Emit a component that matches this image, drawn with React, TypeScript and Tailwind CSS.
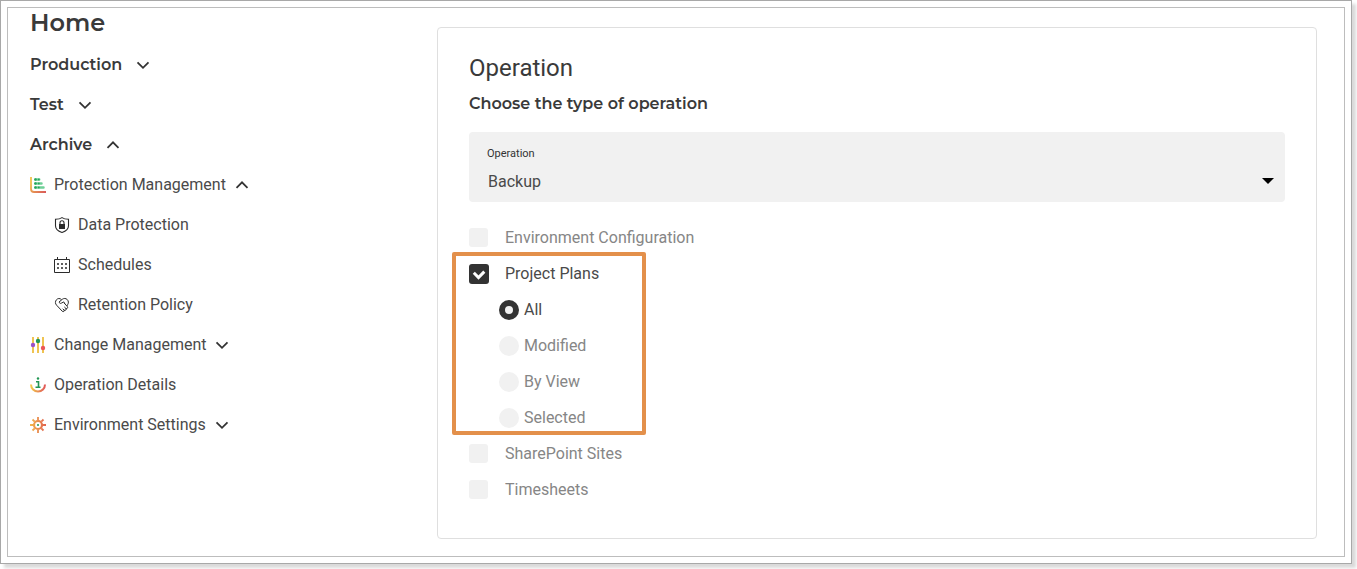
import React, { useState } from "react";

const heading = "font-['Montserrat','Inter',sans-serif] text-[#3a3a3a]";

function Chevron({ open }: { open: boolean }) {
  return (
    <svg width="14" height="14" viewBox="0 0 14 14" fill="none" stroke="#333" strokeWidth="1.8" aria-hidden="true">
      <path d={open ? "M1.5 9.8 7 4.300l5.500 5.500" : "M1.5 4.300 7 9.800l5.500-5.500"} />
    </svg>
  );
}

function BarsIcon() {
  return (
    <svg width="16" height="16" viewBox="0 0 16 16" fill="none" aria-hidden="true">
      <defs>
        <linearGradient id="axis" x1="0" y1="0" x2="1" y2="1">
          <stop offset="0.2" stopColor="#f0c04c" />
          <stop offset="1" stopColor="#d9595a" />
        </linearGradient>
      </defs>
      <path d="M1 0v12q0 3 3 3h12" stroke="url(#axis)" strokeWidth="1.8" />
      <path d="M5.2 2.5h4M5.2 6.5h6.300M5.2 10.5h8.300" stroke="#6fcf97" strokeWidth="2.5" strokeLinecap="round" />
      <g fill="#27a35c">
        <circle cx="5.5" cy="2.5" r="1.2" />
        <circle cx="8.8" cy="2.5" r="0.9" />
        <circle cx="5.5" cy="6.5" r="1.2" />
        <circle cx="8.8" cy="6.5" r="0.9" />
        <circle cx="5.5" cy="10.5" r="1.2" />
        <circle cx="8.8" cy="10.5" r="0.9" />
      </g>
    </svg>
  );
}

function ShieldIcon() {
  return (
    <svg width="16" height="16" viewBox="0 0 16 16" fill="none" stroke="#2b2b2b" aria-hidden="true">
      <path d="M8 .6C6 2 4 2.200 1.500 2.200v6.500c0 3.500 3 5.600 6.500 6.800 3.500-1.200 6.500-3.300 6.500-6.800V2.200C12 2.200 10 2 8 .6Z" strokeWidth="1.1" />
      <path d="M6 7V5.800a2 2 0 0 1 4 0V7" strokeWidth="1.1" />
      <path d="M5 7h6v5H5z" fill="#2b2b2b" stroke="none" />
    </svg>
  );
}

function CalendarIcon() {
  return (
    <svg width="16" height="16" viewBox="0 0 16 16" fill="none" stroke="#2b2b2b" aria-hidden="true">
      <path d="M.5 2.5h15v13H.5zM3.5 0v3M12.5 0v3" />
      <path d="M3 7h2M7 7h2M11 7h2M3 11h2M7 11h2M11 11h2" strokeWidth="1.6" />
    </svg>
  );
}

function HandshakeIcon() {
  return (
    <svg width="16" height="16" viewBox="0 0 16 16" fill="none" stroke="#2b2b2b" strokeLinejoin="round" strokeLinecap="round" aria-hidden="true">
      <path d="M7.200 2.300C5.800 1 3.800 1.300 2.500 2.700c-1.500 1.700-1.400 4 .1 5.500l5.600 6c1.100 1.100 2.500.1 1.900-1.100 1.300.9 2.600-.4 1.800-1.600 1.300.5 2.300-.8 1.500-1.900l-3-3.300" />
      <path d="M5.500 4.600 8.300 2.300c1.500-1.200 3.500-1.100 4.900.2 1.500 1.500 1.500 3.700.4 5.200l-.6 1" />
      <path d="M5.500 4.600c-.8 1.300.6 2.300 1.700 1.600l2.600-1.300.8 1.400" />
      <path d="m9 12 1.100 1.100M10.600 10.200l1.300 1.300" />
    </svg>
  );
}

function SlidersIcon() {
  return (
    <svg width="16" height="16" viewBox="0 0 16 16" aria-hidden="true">
      <path d="M3 0v16M8 0v16M13 0v16" stroke="#efc452" strokeWidth="2" />
      <circle cx="3" cy="8" r="2.2" fill="#9b51c7" />
      <circle cx="8" cy="4" r="2.2" fill="#219653" />
      <circle cx="13" cy="11" r="2.2" fill="#eb5757" />
    </svg>
  );
}

function InfoIcon() {
  return (
    <svg width="16" height="16" viewBox="0 0 16 16" fill="none" aria-hidden="true">
      <defs>
        <linearGradient id="arc" x1="0" y1="0" x2="1" y2="0">
          <stop offset="0" stopColor="#f2c94c" />
          <stop offset="1" stopColor="#e15858" />
        </linearGradient>
      </defs>
      <path d="M1 7.5a7 7 0 0 0 14 0" stroke="url(#arc)" strokeWidth="2" />
      <path d="M6 4.8h2.5V10M5.5 10.2h5" stroke="#219653" strokeWidth="1.6" />
      <circle cx="8" cy="1.5" r="1.2" fill="#219653" />
    </svg>
  );
}

function GearIcon() {
  return (
    <svg width="16" height="16" viewBox="0 0 16 16" fill="none" aria-hidden="true">
      <defs>
        <linearGradient id="gear" gradientUnits="userSpaceOnUse" x1="0" y1="0" x2="16" y2="0">
          <stop offset="0" stopColor="#f2b84c" />
          <stop offset="1" stopColor="#e0604f" />
        </linearGradient>
      </defs>
      <g stroke="url(#gear)">
        <circle cx="8" cy="8" r="4" strokeWidth="2.2" />
        <path d="m8.01 0-.02 3.5M8.01 12.5 7.99 16M0 8.01 3.5 7.99M12.5 8.01 16 7.99M2.5 2.5l2.2 2.2M11.3 11.3l2.2 2.2M13.5 2.5l-2.2 2.2M4.7 11.3l-2.2 2.2" strokeWidth="1.8" />
      </g>
      <circle cx="8" cy="8" r="1" fill="#219653" />
    </svg>
  );
}

interface GroupProps {
  label: string;
  initialOpen?: boolean;
  icon?: React.ReactNode;
  children?: React.ReactNode;
}

function EnvironmentGroup({ label, initialOpen = false, children }: GroupProps) {
  const [open, setOpen] = useState(initialOpen);
  return (
    <li>
      <button
        type="button"
        aria-expanded={open}
        onClick={() => setOpen(!open)}
        className={`flex h-10 cursor-pointer items-center gap-3.5 text-base font-semibold ${heading}`}
      >
        {label}
        <Chevron open={open} />
      </button>
      {open && <ul>{children}</ul>}
    </li>
  );
}

function MenuGroup({ label, icon, initialOpen = false, children }: GroupProps) {
  const [open, setOpen] = useState(initialOpen);
  return (
    <li>
      <button
        type="button"
        aria-expanded={open}
        onClick={() => setOpen(!open)}
        className="flex h-10 cursor-pointer items-center gap-[9px]"
      >
        <span className="flex items-center gap-2">
          {icon}
          {label}
        </span>
        <Chevron open={open} />
      </button>
      {open && <ul className="pl-6">{children}</ul>}
    </li>
  );
}

function MenuLink({ label, icon }: { label: string; icon: React.ReactNode }) {
  return (
    <li>
      <a href="#" className="flex h-10 items-center gap-2">
        {icon}
        {label}
      </a>
    </li>
  );
}

interface CheckRowProps {
  label: string;
  checked: boolean;
  onChange: () => void;
}

function CheckRow({ label, checked, onChange }: CheckRowProps) {
  return (
    <label className={`flex h-9 w-fit items-center gap-4 ${checked ? "text-[#4a4a4a]" : "text-[#868686]"}`}>
      <span className="grid size-5 items-start">
        <input
          type="checkbox"
          checked={checked}
          onChange={onChange}
          className="col-start-1 row-start-1 size-[19px] appearance-none rounded-[3px] bg-[#f1f1f1] checked:size-5 checked:bg-[#333]"
        />
        {checked && (
          <svg
            className="pointer-events-none col-start-1 row-start-1"
            width="20"
            height="20"
            viewBox="0 0 20 20"
            fill="none"
            stroke="#fff"
            strokeWidth="3"
            aria-hidden="true"
          >
            <path d="m4.800 8.800 4.700 4.700 5.800-5.900" />
          </svg>
        )}
      </span>
      {label}
    </label>
  );
}

const scopes = ["All", "Modified", "By View", "Selected"];

function OperationCard() {
  const [operation, setOperation] = useState("Backup");
  const [selected, setSelected] = useState(["Project Plans"]);
  const [scope, setScope] = useState("All");

  const toggle = (name: string) =>
    setSelected(selected.includes(name) ? selected.filter((item) => item !== name) : [...selected, name]);

  const row = (name: string) => (
    <CheckRow label={name} checked={selected.includes(name)} onChange={() => toggle(name)} />
  );

  return (
    <section className="rounded border border-[#dfdfdf] px-[31px] pt-6 pb-[30px]">
      <h2 className="text-2xl leading-8 text-[#3a3a3a]">Operation</h2>
      <p className={`mt-2 text-base leading-6 font-semibold ${heading}`}>Choose the type of operation</p>

      <div className="mt-4 rounded bg-[#f1f1f1] pt-3 pr-[11px] pb-[5px] pl-[18px]">
        <label htmlFor="operation" className="mb-px block text-[11px] leading-5 text-[#333]">
          Operation
        </label>
        <div className="flex items-center pl-px">
          <select
            id="operation"
            value={operation}
            onChange={(e) => setOperation(e.target.value)}
            className="h-8 flex-1 appearance-none bg-transparent pt-[5px] pb-[3px] text-base text-[#4a4a4a]"
          >
            <option>Backup</option>
            <option>Restore</option>
          </select>
          <svg width="12" height="6" viewBox="0 0 12 6" className="pointer-events-none" aria-hidden="true">
            <path d="M0 0h12L6 6z" fill="#000" />
          </svg>
        </div>
      </div>

      <div className="mt-[18px]">
        {row("Environment Configuration")}
        <div className="relative">
          {row("Project Plans")}
          <div role="radiogroup" aria-label="Project Plans" className="pl-[30px]">
            {scopes.map((name) => (
              <label
                key={name}
                className={`flex h-9 w-fit items-center gap-[5px] ${scope === name ? "text-[#4a4a4a]" : "text-[#868686]"}`}
              >
                <input
                  type="radio"
                  name="scope"
                  checked={scope === name}
                  onChange={() => setScope(name)}
                  className="size-5 appearance-none rounded-full bg-[#f1f1f1] checked:border-6 checked:border-[#333]"
                />
                {name}
              </label>
            ))}
          </div>
          {/* callout frame around the project plans options */}
          <div className="pointer-events-none absolute -top-1 bottom-px -left-[17px] w-[194px] rounded-xs border-4 border-[#e3904b]" />
        </div>
        {row("SharePoint Sites")}
        {row("Timesheets")}
      </div>
    </section>
  );
}

export default function App(): React.JSX.Element {
  return (
    <div className="bg-white pr-[5px] pb-[5px] font-['Roboto',sans-serif] text-base text-[#4a4a4a]">
      <div className="border border-[#a8a8a8] bg-white p-1.5 shadow-[4px_4px_3px_#dadada]">
        <div className="flex border border-[#bdbdbd]">
          <nav className="w-[429px] shrink-0 pl-[22px]">
            <h1 className={`mb-[7px] text-2xl leading-[30px] font-semibold ${heading}`}>Home</h1>
            <ul>
              <EnvironmentGroup label="Production" />
              <EnvironmentGroup label="Test" />
              <EnvironmentGroup label="Archive" initialOpen>
                <MenuGroup label="Protection Management" icon={<BarsIcon />} initialOpen>
                  <MenuLink label="Data Protection" icon={<ShieldIcon />} />
                  <MenuLink label="Schedules" icon={<CalendarIcon />} />
                  <MenuLink label="Retention Policy" icon={<HandshakeIcon />} />
                </MenuGroup>
                <MenuGroup label="Change Management" icon={<SlidersIcon />} />
                <MenuLink label="Operation Details" icon={<InfoIcon />} />
                <MenuGroup label="Environment Settings" icon={<GearIcon />} />
              </EnvironmentGroup>
            </ul>
          </nav>
          <main className="min-w-0 flex-1 pt-[19px] pr-[27px] pb-[17px]">
            <OperationCard />
          </main>
        </div>
      </div>
    </div>
  );
}
